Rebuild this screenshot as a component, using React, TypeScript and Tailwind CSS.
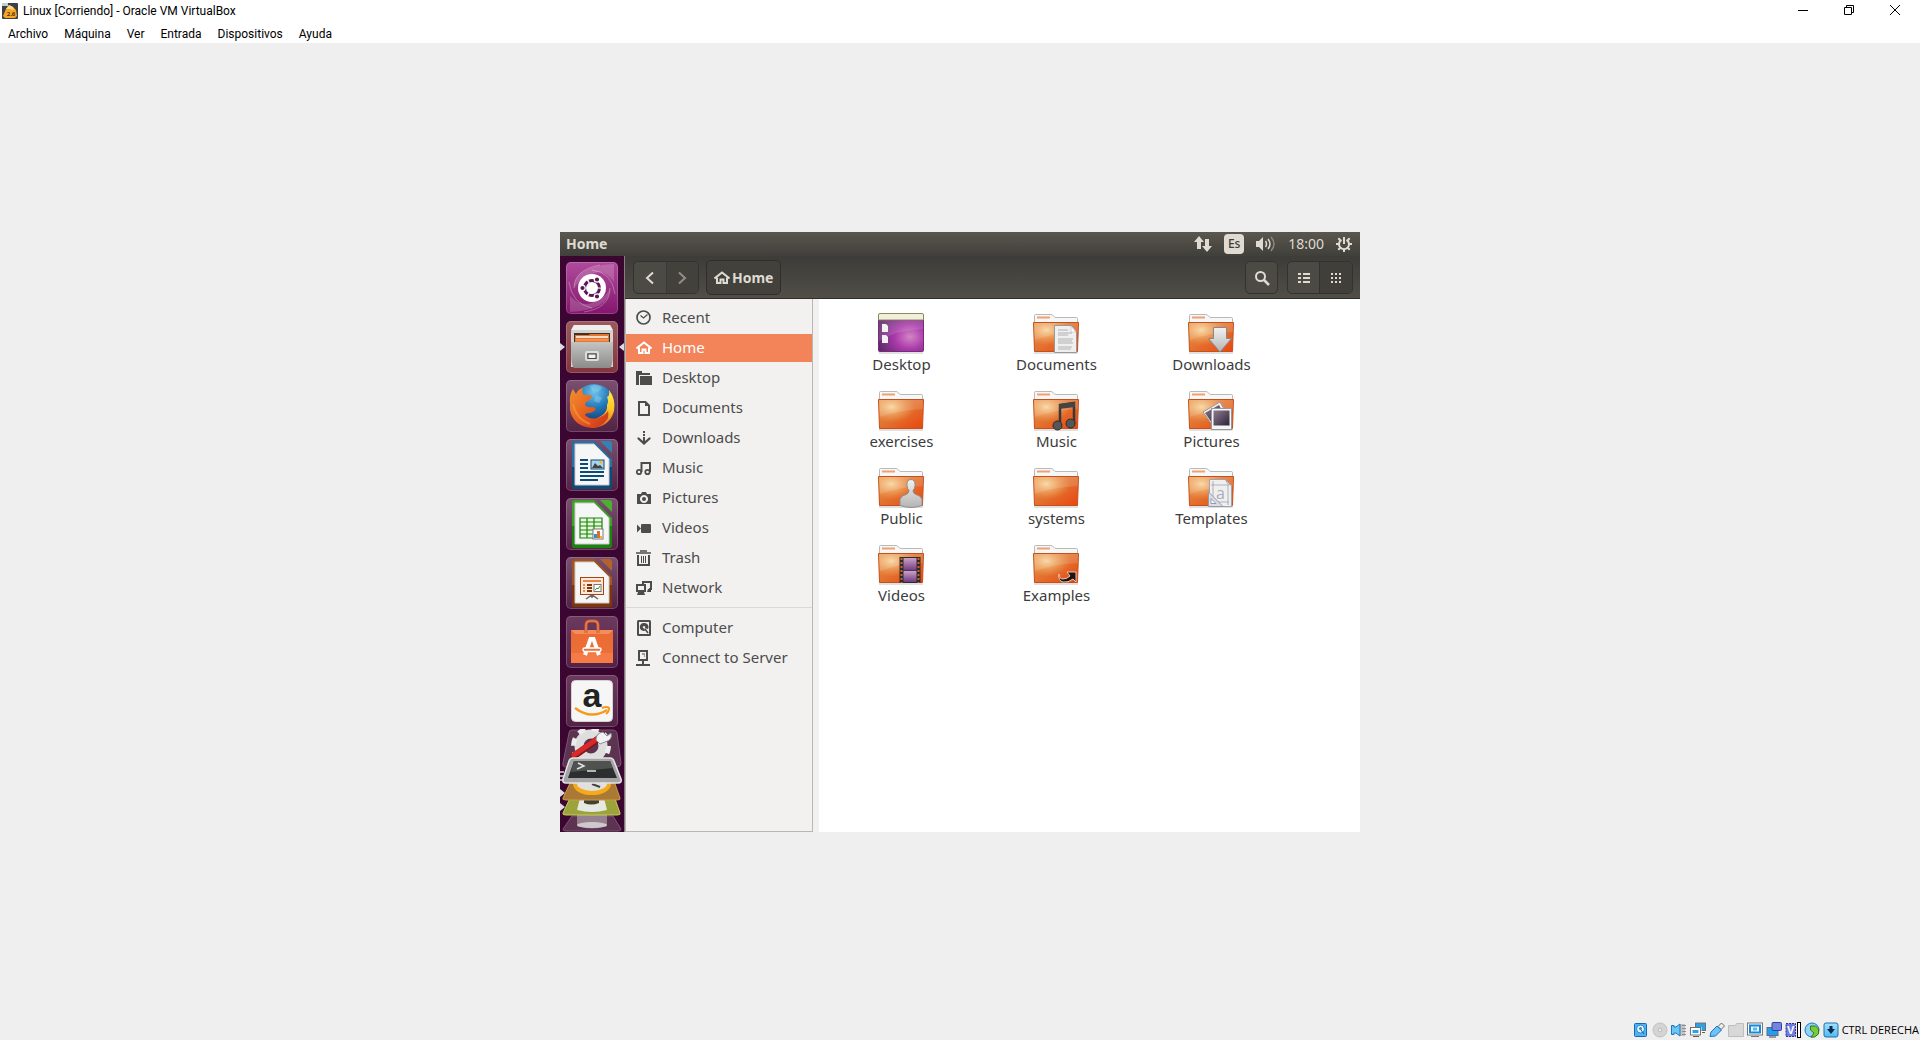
import type { ReactNode } from "react";

function Defs() {
  return (
    <svg width="0" height="0" className="absolute" aria-hidden="true">
      <defs>
        <linearGradient id="folder" x1="0" y1="0" x2="1" y2="1">
          <stop offset="0" stopColor="#e8934c" />
          <stop offset="0.5" stopColor="#e3712f" />
          <stop offset="1" stopColor="#e8450f" />
        </linearGradient>
        <radialGradient id="folderGlow" cx="0.28" cy="0.25" r="0.55">
          <stop offset="0" stopColor="#f8d59c" />
          <stop offset="1" stopColor="#f0a860" stopOpacity="0" />
        </radialGradient>
        <radialGradient id="desk" cx="0.7" cy="0.6" r="0.75">
          <stop offset="0" stopColor="#d286c4" />
          <stop offset="0.45" stopColor="#aa3aab" />
          <stop offset="1" stopColor="#5b2a68" />
        </radialGradient>
        <linearGradient id="silver" x1="0" y1="0" x2="0" y2="1">
          <stop offset="0" stopColor="#f2f2f2" />
          <stop offset="1" stopColor="#b4b4b4" />
        </linearGradient>
        <linearGradient id="metal" x1="0" y1="0" x2="0" y2="1">
          <stop offset="0" stopColor="#c4c4c2" />
          <stop offset="1" stopColor="#8b8b8a" />
        </linearGradient>
        <linearGradient id="film" x1="0" y1="0" x2="0" y2="1">
          <stop offset="0" stopColor="#c9a3c9" />
          <stop offset="1" stopColor="#713a80" />
        </linearGradient>
        <linearGradient id="photo" x1="0" y1="0" x2="1" y2="1">
          <stop offset="0" stopColor="#8d7a90" />
          <stop offset="1" stopColor="#2d2338" />
        </linearGradient>
        <linearGradient id="fox" x1="0" y1="0" x2="1" y2="1">
          <stop offset="0" stopColor="#f4912e" />
          <stop offset="0.6" stopColor="#e4571d" />
          <stop offset="1" stopColor="#c8321c" />
        </linearGradient>
        <linearGradient id="foxTail" x1="0" y1="0" x2="0" y2="1">
          <stop offset="0" stopColor="#fff04a" />
          <stop offset="0.5" stopColor="#fdc425" />
          <stop offset="1" stopColor="#e66a1c" />
        </linearGradient>
        <radialGradient id="globe" cx="0.5" cy="0.2" r="0.8">
          <stop offset="0" stopColor="#6fc4ec" />
          <stop offset="0.5" stopColor="#2277b8" />
          <stop offset="1" stopColor="#14356e" />
        </radialGradient>
        <linearGradient id="bag" x1="0" y1="0" x2="0" y2="1">
          <stop offset="0" stopColor="#e96a32" />
          <stop offset="1" stopColor="#f0703a" />
        </linearGradient>
        <linearGradient id="blueTile" x1="0" y1="0" x2="0" y2="1">
          <stop offset="0" stopColor="#a5e1ff" />
          <stop offset="1" stopColor="#52b8f4" />
        </linearGradient>
      </defs>
    </svg>
  );
}

/* ---------- host window ---------- */

function LinuxIcon() {
  return (
    <svg width="16" height="16" viewBox="0 0 16 16" aria-hidden="true">
      <rect width="16" height="16" rx="1" fill="#3c4048" />
      <path d="M1 13 4 6l3-4 4 2 3 3 1 6-2 2H3z" fill="#f5a623" />
      <path d="m4 6 3-4 4 2 1 3-4-1z" fill="#fbd98c" />
      <path d="M0 0h6v3H0z" fill="#c9ccd1" />
      <text x="9" y="13" fontSize="6" fontWeight="700" textAnchor="middle" fill="#5a2e12" fontFamily="Open Sans, sans-serif">2.6</text>
    </svg>
  );
}

const menus = ["Archivo", "Máquina", "Ver", "Entrada", "Dispositivos", "Ayuda"];

function HostHeader() {
  return (
    <header className="bg-white font-['Roboto',sans-serif] text-[12px] text-black">
      <div className="flex h-[23px] items-start pr-0.5">
        <div className="flex flex-1 items-center gap-[5px] pl-0.5 pt-[3px]">
          <LinuxIcon />
          <h1 className="leading-4">Linux [Corriendo] - Oracle VM VirtualBox</h1>
        </div>
        <button aria-label="Minimizar" className="flex h-5 w-[46px] items-center justify-center">
          <svg width="10" height="10" viewBox="0 0 10 10" shapeRendering="crispEdges"><path d="M0 5h10v1H0z" /></svg>
        </button>
        <button aria-label="Restaurar" className="flex h-5 w-[46px] items-center justify-center">
          <svg width="10" height="10" viewBox="0 0 10 10" fill="none" stroke="#000"><path d="M.5 2.500h7v7h-7zM2.500 2.500v-2h7v7h-2" /></svg>
        </button>
        <button aria-label="Cerrar" className="flex h-5 w-[46px] items-center justify-center">
          <svg width="10" height="10" viewBox="0 0 10 10" stroke="#000"><path d="m0 0 10 10M10 0 0 10" /></svg>
        </button>
      </div>
      <nav className="flex h-5 items-start">
        {menus.map((m) => (
          <button key={m} className="px-2 pt-[3px] leading-4">{m}</button>
        ))}
      </nav>
    </header>
  );
}

const hostIcons: { label: string; art: ReactNode }[] = [
  { label: "Discos duros", art: <><rect x="1.500" y="1.500" width="12" height="13" rx="1" fill="#4db4f0" stroke="#1468b8" /><circle cx="7.500" cy="7" r="4" fill="#e9f6ff" stroke="#2b86cc" /><circle cx="7.500" cy="6.500" r="1.500" fill="#2b86cc" /><path d="m8 8 3 4" stroke="#145a9c" /></> },
  { label: "Unidades ópticas", art: <><circle cx="8" cy="8" r="7" fill="#d4d4d4" stroke="#c0c0c0" /><circle cx="8" cy="8" r="1.800" fill="#efefef" stroke="#bababa" /></> },
  { label: "Audio", art: <><path d="M9 2h5v12H9z" fill="#c4c4c4" /><path d="M11 3.500h4M11 6.500h4M11 9.500h4M11 12.500h4" stroke="#8d8d8d" /><path d="M.5 3.500h2.500v1.500h2l4-3v12l-4-3H3v1.500H.5z" fill="#6cc6f8" stroke="#1d74bc" /></> },
  { label: "Red", art: <><rect x="6" y="1.500" width="9" height="6.500" fill="#29a2ec" stroke="#fff" strokeWidth="3" /><rect x="5.500" y="1" width="10" height="7.500" fill="#29a2ec" stroke="#717171" /><rect x="1" y="6.500" width="9" height="6" fill="#29a2ec" stroke="#fff" strokeWidth="3" /><rect x="0.500" y="5.500" width="10" height="7.500" fill="none" stroke="#717171" /><path d="M3 14.500h6M12 10.500h3" stroke="#5c5c5c" /></> },
  { label: "USB", art: <><path d="M9 4.500 12.500 1 15.500 4 12 7.500z" fill="#eee" stroke="#6b6b6b" /><path d="M1 14.500 2 10l6-6 4.500 4-6 6z" fill="#6cc3fa" stroke="#1d74bc" /></> },
  { label: "Carpetas compartidas", art: <path d="M.5 14.500v-11h7l1-2h7v13z" fill="#d8d8d8" stroke="#bdbdbd" /> },
  { label: "Pantalla", art: <><rect x="0.500" y="1" width="15" height="12" fill="#fff" stroke="#777" /><rect x="3" y="3.500" width="10" height="7" fill="#eafaff" stroke="#1a8ad4" strokeWidth="2" /><rect x="6" y="5.500" width="4" height="3" fill="#59b9ed" /><path d="M4 14.500h8" stroke="#777" /></> },
  { label: "Grabación", art: <><rect x="1" y="5.500" width="11" height="8" fill="#20a0f0" stroke="#5f6c80" /><rect x="6" y="0.500" width="9.500" height="8" rx="1" fill="#7484dc" stroke="#3340a0" /><path d="M3 15h7" stroke="#444" /></> },
  { label: "Características", art: <><rect x="1" y="1.500" width="9.500" height="13" fill="#6f7ce0" stroke="#2c348c" strokeDasharray="2 1" /><text x="5.750" y="12" fontSize="11" fontWeight="700" textAnchor="middle" fill="#fff" fontFamily="Liberation Sans, sans-serif">V</text><rect x="12.500" y="0.500" width="3" height="15" fill="#fff" stroke="#000" /></> },
  { label: "Integración del ratón", art: <><circle cx="8" cy="8" r="7" fill="#8cd2fa" stroke="#1e78bc" /><path d="M6.500 4h5l3 3v5l-4 3H7l3-4-3.500-3z" fill="#7acb3c" stroke="#2f7d10" /></> },
  { label: "Captura de teclado", art: <><rect x="1" y="1" width="14" height="14" rx="2" fill="url(#blueTile)" stroke="#1a72b2" /><path d="M6.500 4h3v3H12l-4 5-4-5h2.500z" fill="#0c2c4c" /></> },
];

function HostStatus() {
  return (
    <footer className="flex h-[19px] items-center justify-end gap-[3px] pb-0.5">
      {hostIcons.map((i) => (
        <button key={i.label} aria-label={i.label}>
          <svg width="16" height="16" viewBox="0 0 16 16">{i.art}</svg>
        </button>
      ))}
      <span className="pr-px text-[11px] leading-4 text-black">CTRL DERECHA</span>
    </footer>
  );
}

/* ---------- top panel ---------- */

function TopPanel() {
  return (
    <div className="flex h-6 items-center bg-linear-to-b from-[#5a574f] to-[#403f3a] pl-1.5 pr-2 text-[#dfdbd2]">
      <span className="flex-1 text-[14px] font-bold leading-5">Home</span>
      <div className="flex items-center gap-3">
        <button aria-label="Network">
          <svg width="18" height="16" viewBox="0 0 18 16" fill="#dfdbd2"><path d="M5 0 0 6h3v7h4V6h3zM13 16l5-6h-3V3h-4v7H8z" /></svg>
        </button>
        <button className="h-5 w-5 rounded-sm bg-[#dfdbd2] text-center text-[12px] font-medium leading-5 text-[#3c3b37]">Es</button>
        <button aria-label="Volume">
          <svg width="20" height="16" viewBox="0 0 20 16" fill="none" stroke="#dfdbd2" strokeWidth="1.500">
            <path d="M0 5h3l4-4v14l-4-4H0z" fill="#dfdbd2" stroke="none" />
            <path d="M9.500 5q2 3 0 6M12 3q4 5 0 10" />
            <path d="M15 1q6 7 0 14" stroke="#8b8880" />
          </svg>
        </button>
        <time className="text-[14px] leading-5">18:00</time>
        <button aria-label="Session">
          <svg width="16" height="16" viewBox="0 0 16 16" fill="none" stroke="#dfdbd2">
            <path d="M5.500 3.800a5 5 0 1 0 5 0" strokeWidth="2" />
            <path d="M8 1v7" strokeWidth="2" />
            <path d="M0 8h3M13 8h3M8 13v3M2.300 13.700l2-2M13.700 13.700l-2-2M2.300 2.300l2 2M13.700 2.300l-2 2" strokeWidth="2" />
          </svg>
        </button>
      </div>
    </div>
  );
}

/* ---------- launcher ---------- */

function UbuntuArt() {
  return (
    <>
      <path d="M8 26Q8 4 48 2V20Q38 6 26 12Q14 16 8 26M44 26Q44 48 4 50V34Q16 46 28 40Q40 36 44 26" fill="#fff" opacity="0.180" />
      <g fill="none" stroke="#fff" strokeOpacity="0.300">
        <path d="M8 26Q8 8 34 3M26 8Q46 10 49 32M44 26Q44 46 18 50M26 46Q6 42 3 20" />
      </g>
      <circle cx="26" cy="26" r="14" fill="#fff" />
      <circle cx="26" cy="26" r="7.500" fill="none" stroke="#5e1756" strokeWidth="3" strokeDasharray="14.200 1.500" strokeDashoffset="-0.700" />
      <g fill="#5e1756" stroke="#fff" strokeWidth="1.200"><circle cx="16.500" cy="26" r="2.700" /><circle cx="31" cy="17.500" r="2.700" /><circle cx="31" cy="34.500" r="2.700" /></g>
    </>
  );
}

function FilesArt() {
  return (
    <>
      <path d="M8 4h36l3 6v36H5V10z" fill="#d3d3d1" />
      <path d="M8 4h36l3 5H5z" fill="#efefed" />
      <path d="M8 12h36v9H8z" fill="#3a3430" />
      <path d="M9 14h14l1-1h19v8H9z" fill="#e7762c" />
      <path d="M10 16h32" stroke="#fff" strokeWidth="1.500" />
      <path d="M10 19h32" stroke="#f6b27c" />
      <path d="M5 21h42v6q0 18-3 20H8q-3-2-3-20z" fill="url(#metal)" />
      <rect x="20" y="31" width="12" height="8" rx="1" fill="#999" stroke="#ddd" strokeWidth="2" />
      <rect x="22" y="33" width="8" height="4.500" fill="#f2f2f2" stroke="#444" />
    </>
  );
}

function FirefoxArt() {
  return (
    <>
      <circle cx="28" cy="24" r="20" fill="url(#globe)" />
      <path d="M24 6q8-3 12 2l-4 4-6-1zM30 15l6 3-3 5-5-2z" fill="#8fd4f0" opacity="0.450" />
      <path d="M43 10q7 9 5 21-4 15-21 17-2-8 8-12 7-4 6-11 2-4 0-8 3-1 2-7z" fill="url(#foxTail)" />
      <path d="M4 24Q3 15 7 9l3 5q2-5 7-6-2 4 1 7 4-1 8 1-1 4-6 6l-1 3q3 3 7 2 3 0 4 2-3 4-7 4-4 0-4 2 5 5 12 3 8-2 11-7 2 7-4 12-5 5-12 5Q7 46 4 30z" fill="url(#fox)" />
      <path d="M7 24q3 15 17 20" fill="none" stroke="#f7a34a" strokeWidth="2" opacity="0.500" />
    </>
  );
}

function DocShell({ main, dark, children }: { main: string; dark: string; children: ReactNode }) {
  return (
    <>
      <path d="M9 2h19l18 18v28q0 2-2 2H8q-2 0-2-2V4q0-2 3-2z" fill={dark} />
      <path d="M9 2h19l18 18v8H6V4q0-2 3-2z" fill={main} opacity="0.700" />
      <path d="M34 2h9q3 0 3 3v9z" fill={main} />
      <path d="M9 5h19l15 15v26H9z" fill="#f6f6f6" stroke="#ccc" />
      {children}
    </>
  );
}

function WriterArt() {
  return (
    <DocShell main="#3482b4" dark="#0c4a78">
      <path d="M14 21h8M14 25h8M14 29h8M14 33h24M14 37h24M14 41h18" stroke="#0c4a78" strokeWidth="2" />
      <rect x="25" y="21" width="13" height="9" fill="#a9d4ee" stroke="#0c4a78" />
      <path d="m26 29 3-5 3 3 2-1 3 3z" fill="#46413a" />
      <circle cx="35" cy="23" r="1.500" fill="#eeb422" />
    </DocShell>
  );
}

function CalcArt() {
  return (
    <DocShell main="#4ab030" dark="#1c8210">
      <path d="M14 20h22v20H14z" fill="#e5f8d8" />
      <path d="M14 20h22v20H14zM14 24h22M14 28h22M14 32h22M14 36h22M21 20v20M28 20v20" fill="none" stroke="#1c8210" strokeWidth="1.200" />
      <rect x="27" y="31" width="10" height="10" fill="#fff" stroke="#777" />
      <path d="M28 36h3v4h-3z" fill="#2a94d0" /><path d="M31 33h3v7h-3z" fill="#ea6b26" /><path d="M34 38h2v2h-2z" fill="#f4b61e" />
    </DocShell>
  );
}

function ImpressArt() {
  return (
    <DocShell main="#b2632c" dark="#7e3508">
      <path d="m20 42 6-4 6 4M26 37v4" fill="none" stroke="#666" strokeWidth="1.500" />
      <rect x="14.500" y="20.500" width="23" height="17" fill="#fae9da" stroke="#a8430f" />
      <path d="M17 24h18" stroke="#d9661f" strokeWidth="1.500" />
      <path d="M17 28h2M17 31h2M17 34h2" stroke="#e08b52" strokeWidth="2" />
      <path d="M21 28h5M21 31h5M21 34h5" stroke="#7e3508" strokeWidth="2" />
      <rect x="28" y="27.500" width="7" height="7" fill="#fff" stroke="#777" />
      <path d="m29 33 2-2 1 1 2-3" fill="none" stroke="#369a3a" />
    </DocShell>
  );
}

function SoftwareArt() {
  return (
    <>
      <path d="M5 14h42v33H5z" fill="url(#bag)" />
      <path d="M5 14h42l-4 4H9z" fill="#f68c5c" />
      <path d="M5 37h42v10H5z" fill="#f98350" opacity="0.600" />
      <path d="M20 17V9q0-4 4-4h4q4 0 4 4v8" fill="none" stroke="#d05a2a" strokeWidth="3" />
      <path d="M20 17V9q0-4 4-4h4q4 0 4 4v8" fill="none" stroke="#f48c62" />
      <path d="m19 39 5.500-16h3L33 39" fill="none" stroke="#fff" strokeWidth="4" />
      <rect x="17" y="32" width="18" height="3.500" rx="1.700" fill="#e8703c" stroke="#fff" strokeWidth="1.500" />
    </>
  );
}

function AmazonArt() {
  return (
    <>
      <rect x="5.500" y="5.500" width="41" height="41" rx="4" fill="#f6f6f6" stroke="#d4d4d4" />
      <text x="26" y="32" fontSize="34" fontWeight="700" textAnchor="middle" fill="#222" fontFamily="Liberation Sans, sans-serif">a</text>
      <path d="M9 33q16 12 32 2" fill="none" stroke="#f79a1c" strokeWidth="2.500" />
      <path d="M36 33q5-2 7 0 0 4-3 6" fill="none" stroke="#f79a1c" strokeWidth="2" />
    </>
  );
}

const apps: { label: string; tile: string; art: ReactNode; active?: boolean }[] = [
  { label: "Search your computer", tile: "from-[#b04a9c] to-[#85146e]", art: <UbuntuArt /> },
  { label: "Files", tile: "from-[#9a5a60] to-[#83343c]", art: <FilesArt />, active: true },
  { label: "Firefox", tile: "from-[#7a5070] to-[#532245]", art: <FirefoxArt /> },
  { label: "LibreOffice Writer", tile: "from-[#7a5070] to-[#532245]", art: <WriterArt /> },
  { label: "LibreOffice Calc", tile: "from-[#7a5070] to-[#532245]", art: <CalcArt /> },
  { label: "LibreOffice Impress", tile: "from-[#7a5070] to-[#532245]", art: <ImpressArt /> },
  { label: "Ubuntu Software", tile: "from-[#6b3a5e] to-[#532245]", art: <SoftwareArt /> },
  { label: "Amazon", tile: "from-[#6b3a5e] to-[#532245]", art: <AmazonArt /> },
];

function FoldedStack() {
  return (
    <svg width="64" height="103" viewBox="0 0 64 103" aria-hidden="true">
      <path d="M12 1h41q3 0 4 3l4 30q0 4-4 4H6q-4 0-3-4L9 4q0-3 3-3z" fill="#5c3350" stroke="#7a5570" />
      <circle cx="31" cy="17" r="12" fill="none" stroke="#dedede" strokeWidth="9" />
      <circle cx="31" cy="17" r="17.500" fill="none" stroke="#ececec" strokeWidth="5" strokeDasharray="7.500 6.240" />
      <path d="M14 27 38 10" stroke="#8d1212" strokeWidth="7" strokeLinecap="round" />
      <path d="M14 26 37 10" stroke="#d52b2b" strokeWidth="5" strokeLinecap="round" />
      <path d="M36 11q0-7 7-8l4 4 4-3q2 7-6 9-3 1-5 2z" fill="#f2f2f2" stroke="#8c8c8c" />

      <path d="M12 87h41l8 13q0 2-3 2H6q-3 0-3-2z" fill="#5c3350" stroke="#7a5570" />
      <path d="M17 84h30v13q-15 5-30 0z" fill="#94808f" />
      <ellipse cx="32" cy="96" rx="15" ry="3" fill="#cfc9cd" />

      <path d="M11 67h43l6 17q1 2-3 2H6q-4 0-3-2z" fill="#9ba33a" stroke="#c6cc5c" />
      <path d="M20 69h24l3 12q-15 4-30 0z" fill="#e6e8e4" />
      <path d="M24 68h15v6q-8 3-15 0z" fill="#42412e" />

      <path d="M11 52h43l6 17q1 2-3 2H6q-4 0-3-2z" fill="#aa7a35" stroke="#c99a4c" />
      <ellipse cx="32" cy="55" rx="17" ry="9" fill="#e2e0dc" stroke="#f5a91d" strokeWidth="4" />
      <path d="m32 55 8 3" stroke="#444" strokeWidth="2" />

      <path d="M13 29h37q3 0 4 3l7 18q1 4-3 4H6q-4 0-3-4l6-18q1-3 4-3z" fill="#a5a5a5" stroke="#e4e4e4" strokeWidth="1.500" />
      <path d="M14 32h36l7 17H8z" fill="#2d2e2f" />
      <path d="M14 32h36l3 7-42 4z" fill="#50524f" />
      <path d="m18 34 6 3-7 3M27 42h9" fill="none" stroke="#e2e2e2" strokeWidth="1.500" />
      <path d="M0 43h4M0 47h4M0 51h4" stroke="#ddd" strokeWidth="1.500" />
      <path d="m0 60 5 4-5 4zM0 74l5 4-5 4z" fill="#ddd" />
    </svg>
  );
}

function Launcher() {
  return (
    <nav aria-label="Launcher" className="flex w-[65px] shrink-0 flex-col border-r border-[#8a7a86] bg-[#3b0632]">
      <ul className="flex flex-col gap-[7px] pt-1.5">
        {apps.map((a) => (
          <li key={a.label} className="flex h-[52px] items-center justify-between">
            <svg width="6" height="10" viewBox="0 0 6 10">{a.active && <path d="m0 1 5 4-5 4z" fill="#ddd" />}</svg>
            <button aria-label={a.label} className={"h-[52px] w-[52px] rounded-[5px] bg-linear-to-b shadow-[inset_0_0_0_1px_rgba(255,255,255,0.180)] " + a.tile}>
              <svg width="52" height="52" viewBox="0 0 52 52" className="overflow-visible">{a.art}</svg>
            </button>
            <svg width="6" height="10" viewBox="0 0 6 10">{a.active && <path d="m6 1-5 4 5 4z" fill="#ddd" />}</svg>
          </li>
        ))}
      </ul>
      <button aria-label="More applications" className="pt-0.5"><FoldedStack /></button>
    </nav>
  );
}

/* ---------- toolbar ---------- */

function HomeGlyph() {
  return (
    <svg width="16" height="16" viewBox="0 0 16 16" fill="none" stroke="currentColor" strokeWidth="2" aria-hidden="true">
      <path d="M0.500 8.500 8 2.500l7.500 6" />
      <path d="M3 7.500V13h3.500V9.500h3V13H13V7.500" />
    </svg>
  );
}

function Toolbar() {
  return (
    <div className="flex h-[43px] items-center justify-between border-b border-[#2f2e2a] bg-linear-to-b from-[#3d3c38] to-[#504e47] pl-2 pr-[7px] pt-px text-[#dfdbd2]">
      <div className="flex items-center gap-[7px]">
        <div className="flex h-[33px] w-[66px] overflow-hidden rounded-[5px] border border-[#33322e] bg-[#4b4a44]">
          <button aria-label="Back" className="flex flex-1 items-center justify-center">
            <svg width="16" height="16" viewBox="0 0 16 16" fill="none" stroke="#dfdbd2" strokeWidth="2"><path d="m11 2.500-6 5.500 6 5.500" /></svg>
          </button>
          <button aria-label="Forward" className="flex flex-1 items-center justify-center border-l border-[#3a3935] bg-[#42413c]">
            <svg width="16" height="16" viewBox="0 0 16 16" fill="none" stroke="#918f87" strokeWidth="2"><path d="m5 2.500 6 5.500-6 5.500" /></svg>
          </button>
        </div>
        <button className="flex h-[35px] items-center gap-0.5 rounded-[5px] border border-[#2f2e2a] bg-[#42413c] px-[7px] text-[14px] font-bold">
          <HomeGlyph />
          Home
        </button>
      </div>
      <div className="flex items-center gap-[9px]">
        <button aria-label="Search" className="flex h-[33px] w-[33px] items-center justify-center rounded-[5px] border border-[#33322e] bg-[#4b4a44]">
          <svg width="16" height="16" viewBox="0 0 16 16" fill="none" stroke="#dfdbd2" strokeWidth="2"><circle cx="6.500" cy="6.500" r="4.500" /><path d="m10 10 5 5" strokeWidth="2.500" /></svg>
        </button>
        <div className="flex h-[33px] w-[66px] overflow-hidden rounded-[5px] border border-[#33322e] bg-[#4b4a44]">
          <button aria-label="List view" className="flex w-[31px] items-center justify-center">
            <svg width="12" height="10" viewBox="0 0 12 10" fill="#dfdbd2" shapeRendering="crispEdges"><path d="M0 0h3v2H0zM5 0h7v2H5zM0 4h3v2H0zM5 4h7v2H5zM0 8h3v2H0zM5 8h7v2H5z" /></svg>
          </button>
          <button aria-label="Icon view" className="flex flex-1 items-center justify-center border-l border-[#33322e] bg-[#403f3a]">
            <svg width="10" height="10" viewBox="0 0 10 10" fill="#dfdbd2" shapeRendering="crispEdges"><path d="M0 0h2v2H0zM4 0h2v2H4zM8 0h2v2H8zM0 4h2v2H0zM4 4h2v2H4zM8 4h2v2H8zM0 8h2v2H0zM4 8h2v2H4zM8 8h2v2H8z" /></svg>
          </button>
        </div>
      </div>
    </div>
  );
}

/* ---------- places ---------- */

const line = { fill: "none", stroke: "currentColor", strokeWidth: 2 };

const places: { label: string; art: ReactNode }[] = [
  { label: "Recent", art: <><circle cx="7.500" cy="7.500" r="6.500" {...line} strokeWidth="1.700" /><path d="m4.500 5.500 3 2.500 4-3.500" {...line} strokeWidth="1.200" /></> },
  { label: "Home", art: <><path d="M0.500 8.500 8 2.500l7.500 6" {...line} /><path d="M3 7.500V13h3.500V9.500h3V13H13V7.500" {...line} /></> },
  { label: "Desktop", art: <path d="M0 1h6v2h8v2H3v10H0zM4 6h12v9H4z" fill="currentColor" /> },
  { label: "Documents", art: <><path d="M3 2h6.500L13 5.500V15H3z" {...line} /><path d="M9 2v4h4z" fill="currentColor" /></> },
  { label: "Downloads", art: <path d="M7 1h2v2H7zM7 4h2v2H7zM7 7h2v4l4-3.500h1.500V9L8 15 1.500 9V7.500H3L7 11z" fill="currentColor" /> },
  { label: "Music", art: <><circle cx="3" cy="12" r="2.200" {...line} strokeWidth="1.800" /><circle cx="11.500" cy="12" r="2.200" {...line} strokeWidth="1.800" /><path d="M5.500 12V3h8.500v9" {...line} /></> },
  { label: "Pictures", art: <><path fillRule="evenodd" d="M1 4h4l1-2h4l1 2h4v10H1zM8 5a4 4 0 1 0 .01 0z" fill="currentColor" /><circle cx="8" cy="9" r="2" fill="currentColor" /></> },
  { label: "Videos", art: <><rect x="5" y="4" width="10" height="9" rx="1" fill="currentColor" /><path d="M1 4.500 5 8.500 1 12.500z" fill="currentColor" /></> },
  { label: "Trash", art: <><path d="M0 3h15M4 1h7" {...line} strokeWidth="1.700" /><path d="M2 5v10h11V5" {...line} /><path d="M5.500 6v7M7.500 6v7M9.500 6v7" {...line} strokeWidth="1" /></> },
  { label: "Network", art: <><path d="M7 5V2h8v7h-2" {...line} /><rect x="1" y="5" width="8" height="6" {...line} /><path d="M2 12h6l1 3H1zM12 9h3v3h-4z" fill="currentColor" /></> },
];

const devices: { label: string; art: ReactNode }[] = [
  { label: "Computer", art: <><rect x="2" y="1" width="12" height="14" rx="0.500" {...line} /><path fillRule="evenodd" d="M8 3a4 4 0 1 0 1 7.800L8 8l4 1A4 4 0 0 0 8 3zm0 3a1.200 1.200 0 1 0 .01 0z" fill="currentColor" /><path d="m9 9 3 4" {...line} strokeWidth="1.500" /></> },
  { label: "Connect to Server", art: <><path d="M3 1h8v9H3zM7 10v5M0 15h14" {...line} /><path d="M6 4h3M8 6h1" {...line} strokeWidth="1" /></> },
];

function PlaceRow({ label, art }: { label: string; art: ReactNode }) {
  const active = label === "Home";
  return (
    <li>
      <a href="#" aria-current={active ? "page" : undefined} className={"flex h-7 items-center gap-2.5 pl-2.5 text-[15px] leading-5 " + (active ? "bg-[#f38459] text-white" : "text-[#4c4c4c]")}>
        <svg width="16" height="16" viewBox="0 0 16 16" aria-hidden="true">{art}</svg>
        <span className="pb-0.5">{label}</span>
      </a>
    </li>
  );
}

function Places() {
  return (
    <aside className="w-[188px] shrink-0 border-x border-b border-[#bab6b1] bg-[#f2f1f0] pt-[5px]">
      <ul className="flex flex-col gap-0.5">{places.map((p) => <PlaceRow key={p.label} {...p} />)}</ul>
      <hr className="mb-1.5 mt-[5px] border-[#dbd9d7]" />
      <ul className="flex flex-col gap-0.5">{devices.map((p) => <PlaceRow key={p.label} {...p} />)}</ul>
    </aside>
  );
}

/* ---------- files ---------- */

function Folder({ children }: { children?: ReactNode }) {
  return (
    <svg width="49" height="41" viewBox="0 0 49 41" aria-hidden="true">
      <path d="M2 40h44" stroke="#000" strokeOpacity="0.120" strokeWidth="2" />
      <path d="M2.500 12V2.500q0-1 1-1H19q1.500 0 2.500 1.500t2.500 1.500h20.500q1 0 1 1V12z" fill="#f7f7f7" stroke="#b9b9b9" />
      <path d="M5 4.500h13" stroke="#f0a070" strokeWidth="2" />
      <path d="M1.500 9.500h45L45.500 38.500h-43z" fill="url(#folder)" stroke="#c4501c" />
      <path d="M2 10h44l-1 28H3z" fill="url(#folderGlow)" />
      <path d="M2 10h44v9Q22 20 3 27z" fill="#fff" opacity="0.130" />
      {children}
    </svg>
  );
}

const files: { label: string; art: ReactNode }[] = [
  {
    label: "Desktop",
    art: (
      <svg width="49" height="41" viewBox="0 0 49 41" aria-hidden="true">
        <path d="M2 40h44" stroke="#000" strokeOpacity="0.120" strokeWidth="2" />
        <rect x="1.500" y="1.500" width="45" height="37" rx="1" fill="url(#desk)" stroke="#7a2a78" />
        <path d="M1.500 2q0-1.500 1.500-1.500h42q1.500 0 1.500 1.500v5h-45z" fill="#f1efdc" stroke="#8d8a5c" />
        <path d="M2 8h44v8Q20 17 2 28z" fill="#fff" opacity="0.120" />
        <path d="M5 11h4l2 2v6H5zM5 22h4l2 2v6H5z" fill="#f2f2f2" />
      </svg>
    ),
  },
  { label: "Documents", art: <Folder><path d="M22.500 12.500h17l5 6v21h-22z" fill="#efefef" stroke="#999" /><path d="M39 13v6h5z" fill="#fff" stroke="#aaa" strokeWidth="0.500" /><path d="M26 17h10M26 20h14M26 22h10M26 26h15M26 28h14M26 30h15M26 34h14M26 36h13" stroke="#aaa" strokeWidth="0.900" /></Folder> },
  { label: "Downloads", art: <Folder><path d="M26.500 14.500h13v11h5L33 39 21.500 25.500h5z" fill="url(#silver)" stroke="#888" /></Folder> },
  { label: "exercises", art: <Folder /> },
  { label: "Music", art: <Folder><path d="M28 35V15l14-2v21" fill="none" stroke="#383838" strokeWidth="2.500" /><path d="M27 14l16-2v5l-16 2z" fill="#444" /><circle cx="25.500" cy="35.500" r="4.500" fill="#565656" stroke="#2c2c2c" /><circle cx="38.500" cy="33.500" r="4.500" fill="#565656" stroke="#2c2c2c" /></Folder> },
  { label: "Pictures", art: <Folder><path d="m16 22 17-10 8 14-15 10z" fill="#f0f0f0" stroke="#999" /><path d="m18 23 14-8 6 11-13 7z" fill="url(#photo)" /><rect x="24.500" y="18.500" width="20" height="21" fill="#f6f6f6" stroke="#999" /><rect x="26.500" y="20.500" width="16" height="15" fill="url(#photo)" /></Folder> },
  { label: "Public", art: <Folder><path d="M33.500 12.500q5 0 4.500 6 0 3-2 5 0 3 3 4 5 1 6 5v6q-11 4-22 0v-6q1-4 6-5 3-1 3-4-2-2-2-5-.5-6 4-6z" fill="url(#silver)" stroke="#8e8e8e" /></Folder> },
  { label: "systems", art: <Folder /> },
  { label: "Templates", art: <Folder><path d="M22.500 12.500h16l6 6v21h-22z" fill="#efefef" stroke="#a2a2a8" /><path d="M38.500 12.500q1 5 6 6" fill="none" stroke="#aaa" /><path d="M24 18h18M26 14v22M24 35h18M41 18v20" stroke="#9ea2b0" strokeWidth="0.800" /><text x="33.500" y="32" fontSize="16" textAnchor="middle" fill="#a8acba" fontFamily="Open Sans, sans-serif">a</text><path d="M21.500 25 36 39.500H21.500z" fill="#dcdde4" stroke="#9599a8" /><path d="M24 31.500 29 36.500h-5z" fill="#fff" stroke="#9599a8" /></Folder> },
  { label: "Videos", art: <Folder><rect x="22.500" y="13" width="21" height="26" fill="#2e2a2c" /><rect x="26.500" y="14" width="13" height="12.500" fill="url(#film)" /><rect x="26.500" y="27" width="13" height="11" fill="url(#film)" /><path d="M24.500 14v25M41.500 14v25" stroke="#c8622f" strokeWidth="2" strokeDasharray="2 2" /></Folder> },
  { label: "Examples", art: <Folder><path d="M27 30q0 5 4 5t7-3l-3-4h9v10l-3-3q-5 4-10 3t-4-8z" fill="#1e1412" stroke="#f3d8c8" strokeWidth="0.900" /></Folder> },
];

function FileGrid() {
  return (
    <main className="flex-1 bg-white pl-[5px] pt-3.5">
      <ul className="grid grid-cols-[repeat(auto-fill,155px)] gap-y-1">
        {files.map((f) => (
          <li key={f.label}>
            <button className="flex h-[73px] w-full flex-col items-center text-[15px] leading-5 text-[#3c3c3c]">
              {f.art}
              {f.label}
            </button>
          </li>
        ))}
      </ul>
    </main>
  );
}

export default function App() {
  return (
    <div className="flex min-h-screen flex-col bg-[#efefef] font-['Open_Sans','Noto_Sans',sans-serif]">
      <Defs />
      <HostHeader />
      <div className="flex flex-1 items-center justify-center">
        <section aria-label="Linux" className="flex min-h-[600px] w-full max-w-[800px] flex-col bg-[#f2f1f0] font-['Noto_Sans',sans-serif]">
          <TopPanel />
          <div className="flex flex-1">
            <Launcher />
            <div className="flex min-w-0 flex-1 flex-col">
              <Toolbar />
              <div className="flex flex-1 gap-1.5">
                <Places />
                <FileGrid />
              </div>
            </div>
          </div>
        </section>
      </div>
      <HostStatus />
    </div>
  );
}
